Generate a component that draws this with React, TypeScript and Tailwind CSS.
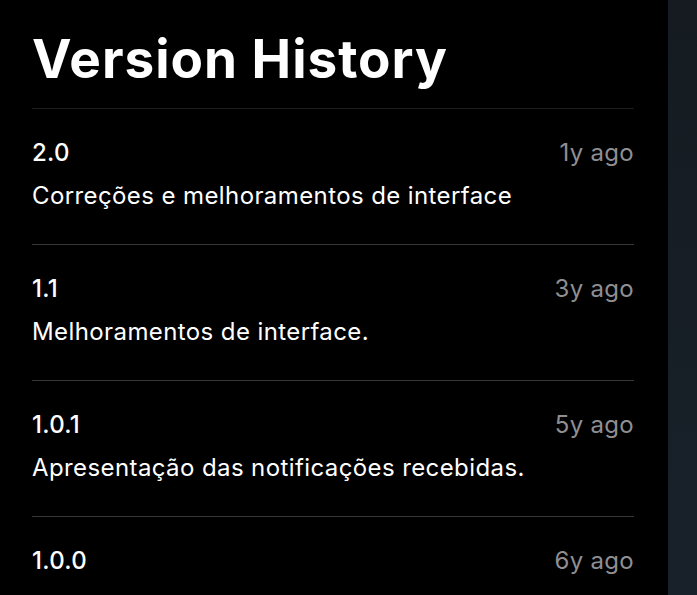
const versions = [
  { version: '2.0', when: '1y ago', notes: 'Correções e melhoramentos de interface' },
  { version: '1.1', when: '3y ago', notes: 'Melhoramentos de interface.' },
  { version: '1.0.1', when: '5y ago', notes: 'Apresentação das notificações recebidas.' },
  { version: '1.0.0', when: '6y ago', notes: '' },
];

export default function App() {
  return (
    <div className="flex h-[595px] w-[697px] overflow-hidden bg-black font-['Inter',sans-serif] antialiased">
      <div className="w-[668px] shrink-0 pl-8 pr-[34px]">
        <h1 className="mt-[27px] h-[81px] text-[53px] font-bold leading-[64px] tracking-[1px] text-white">
          Version History
        </h1>
        {versions.map((v, i) => (
          <div
            key={v.version}
            className={`border-t pt-8 pb-[34px] ${i === 0 ? 'border-[#1c1c1e]' : 'border-[#38383a]'}`}
          >
            <div className="flex h-6 items-center justify-between leading-6">
              <span className="text-[24px] font-medium tracking-[0.3px] text-white">{v.version}</span>
              <span className="text-[24px] tracking-[0.3px] text-[#8e8e93]">{v.when}</span>
            </div>
            {v.notes && (
              <p className="mt-[17px] h-7 text-[24px] leading-7 tracking-[0.4px] text-white">{v.notes}</p>
            )}
          </div>
        ))}
      </div>
      <div className="flex-1 bg-gradient-to-b from-[#151b21] to-[#18212a]" />
    </div>
  );
}
